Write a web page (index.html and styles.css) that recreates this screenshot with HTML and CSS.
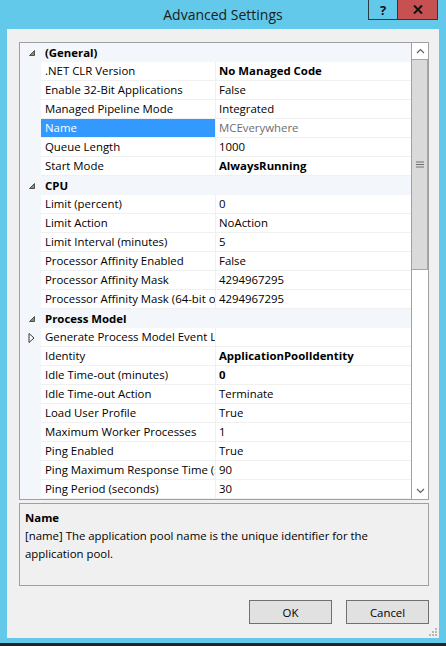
FILE: index.html
```html
<!DOCTYPE html>
<html>
<head>
<meta charset="utf-8">
<link rel="stylesheet" href="styles.css">
</head>
<body>
<div class="frame">
  <div class="titlebar">
    <div></div>
    <div class="title">Advanced Settings</div>
    <div class="caption-btns">
      <div class="cbtn help">?</div>
      <div class="cbtn close">
        <svg width="10" height="9" viewBox="0 0 10 9"><path d="M1 0.5 L9 8.5 M9 0.5 L1 8.5" stroke="#111" stroke-width="2" fill="none"/></svg>
      </div>
    </div>
  </div>
  <div class="client">
    <div class="grid">
      <div class="rows">
        <div class="row cat"><span class="gut"><svg class="exp" width="8" height="8" viewBox="0 0 8 8"><path d="M6.5 1.5 L6.5 6.5 L1.5 6.5 Z" fill="#8a8a8a" stroke="#505050" stroke-width="1"/></svg></span><span class="catname">(General)</span></div>
        <div class="row"><span class="gut"></span><span class="name">.NET CLR Version</span><span class="val b">No Managed Code</span></div>
        <div class="row"><span class="gut"></span><span class="name">Enable 32-Bit Applications</span><span class="val">False</span></div>
        <div class="row"><span class="gut"></span><span class="name">Managed Pipeline Mode</span><span class="val">Integrated</span></div>
        <div class="row sel"><span class="gut"></span><span class="name">Name</span><span class="val ro">MCEverywhere</span></div>
        <div class="row"><span class="gut"></span><span class="name">Queue Length</span><span class="val">1000</span></div>
        <div class="row"><span class="gut"></span><span class="name">Start Mode</span><span class="val b">AlwaysRunning</span></div>
        <div class="row cat"><span class="gut"><svg class="exp" width="8" height="8" viewBox="0 0 8 8"><path d="M6.5 1.5 L6.5 6.5 L1.5 6.5 Z" fill="#8a8a8a" stroke="#505050" stroke-width="1"/></svg></span><span class="catname">CPU</span></div>
        <div class="row"><span class="gut"></span><span class="name">Limit (percent)</span><span class="val">0</span></div>
        <div class="row"><span class="gut"></span><span class="name">Limit Action</span><span class="val">NoAction</span></div>
        <div class="row"><span class="gut"></span><span class="name">Limit Interval (minutes)</span><span class="val">5</span></div>
        <div class="row"><span class="gut"></span><span class="name">Processor Affinity Enabled</span><span class="val">False</span></div>
        <div class="row"><span class="gut"></span><span class="name">Processor Affinity Mask</span><span class="val">4294967295</span></div>
        <div class="row"><span class="gut"></span><span class="name">Processor Affinity Mask (64-bit option)</span><span class="val">4294967295</span></div>
        <div class="row cat"><span class="gut"><svg class="exp" width="8" height="8" viewBox="0 0 8 8"><path d="M6.5 1.5 L6.5 6.5 L1.5 6.5 Z" fill="#8a8a8a" stroke="#505050" stroke-width="1"/></svg></span><span class="catname">Process Model</span></div>
        <div class="row"><span class="gut"><svg class="tri" width="7" height="10" viewBox="0 0 7 10"><path d="M1 0.5 L6 5 L1 9.5 Z" fill="#fff" stroke="#333" stroke-width="1"/></svg></span><span class="name">Generate Process Model Event Log Entry</span><span class="val"></span></div>
        <div class="row"><span class="gut"></span><span class="name">Identity</span><span class="val b">ApplicationPoolIdentity</span></div>
        <div class="row"><span class="gut"></span><span class="name">Idle Time-out (minutes)</span><span class="val b">0</span></div>
        <div class="row"><span class="gut"></span><span class="name">Idle Time-out Action</span><span class="val">Terminate</span></div>
        <div class="row"><span class="gut"></span><span class="name">Load User Profile</span><span class="val">True</span></div>
        <div class="row"><span class="gut"></span><span class="name">Maximum Worker Processes</span><span class="val">1</span></div>
        <div class="row"><span class="gut"></span><span class="name">Ping Enabled</span><span class="val">True</span></div>
        <div class="row"><span class="gut"></span><span class="name">Ping Maximum Response Time (seconds)</span><span class="val">90</span></div>
        <div class="row"><span class="gut"></span><span class="name">Ping Period (seconds)</span><span class="val">30</span></div>
      </div>
      <div class="sb">
        <div class="sb-btn"><svg width="9" height="6" viewBox="0 0 9 6"><path d="M1 5 L4.5 1.5 L8 5" stroke="#606060" stroke-width="1.2" fill="none"/></svg></div>
        <div class="sb-thumb"><svg width="8" height="7" viewBox="0 0 8 7"><path d="M0 1 H8 M0 3.5 H8 M0 6 H8" stroke="#707070" stroke-width="1.2"/></svg></div>
        <div class="sb-track"></div>
        <div class="sb-btn"><svg width="9" height="6" viewBox="0 0 9 6"><path d="M1 1 L4.5 4.5 L8 1" stroke="#606060" stroke-width="1.2" fill="none"/></svg></div>
      </div>
    </div>
    <div class="desc">
      <div class="desc-title">Name</div>
      <div class="desc-text">[name] The application pool name is the unique identifier for the application pool.</div>
    </div>
    <div class="buttons">
      <div class="btn">OK</div>
      <div class="btn">Cancel</div>
    </div>
    <svg class="grip" width="8" height="8" viewBox="0 0 8 8"><g fill="#b8b8b8"><rect x="6" y="0" width="2" height="2"/><rect x="3" y="3" width="2" height="2"/><rect x="6" y="3" width="2" height="2"/><rect x="0" y="6" width="2" height="2"/><rect x="3" y="6" width="2" height="2"/><rect x="6" y="6" width="2" height="2"/></g></svg>
  </div>
</div>
</body>
</html>
```

FILE: styles.css
```css
html, body {
  margin: 0;
  padding: 0;
  background: #63c9ea;
}
body {
  font-family: "Open Sans", "Liberation Sans", Arial, sans-serif;
  font-size: 11.4px;
  color: #000;
}
.frame {
  width: 446px;
  height: 643px;
  background: #63c9ea;
  border-bottom: 3px solid #1d2428;
  display: flex;
  flex-direction: column;
}
.titlebar {
  height: 29px;
  display: grid;
  grid-template-columns: 1fr auto 1fr;
  flex-shrink: 0;
}
.title {
  font-size: 14px;
  line-height: 30px;
  color: #1b1b1b;
}
.caption-btns {
  justify-self: end;
  align-self: start;
  display: flex;
  margin-right: 8px;
}
.cbtn {
  height: 20px;
  box-sizing: border-box;
  display: flex;
  align-items: center;
  justify-content: center;
  font-weight: bold;
  font-size: 13px;
  border: 1px solid #2a3a40;
  border-top: none;
}
.help {
  width: 29px;
  background: #63c9ea;
  border-right: none;
  color: #111;
}
.close {
  width: 41px;
  background: #c75050;
}
.client {
  position: relative;
  margin: 0 7px;
  height: 609px;
  background: #f0f0f0;
  box-sizing: border-box;
  padding: 13px 10px 0 12px;
  display: flex;
  flex-direction: column;
}
.grid {
  height: 458px;
  box-sizing: border-box;
  border: 1px solid #a0a0a0;
  background: #fff;
  display: flex;
}
.rows {
  flex: 1;
  display: flex;
  flex-direction: column;
  min-width: 0;
}
.row {
  height: 19px;
  display: flex;
  flex-shrink: 0;
}
.gut {
  width: 21px;
  flex-shrink: 0;
  background: #f3f6fb;
  position: relative;
}
.exp {
  position: absolute;
  left: 8px;
  top: 6px;
}
.tri {
  position: absolute;
  left: 8px;
  top: 5px;
}
.name {
  width: 170px;
  flex-shrink: 0;
  padding-left: 4px;
  border-right: 1px solid #f0f0f0;
  border-bottom: 1px solid #f0f0f0;
  line-height: 18px;
  white-space: nowrap;
  overflow: hidden;
}
.val {
  flex: 1;
  min-width: 0;
  padding-left: 3px;
  border-bottom: 1px solid #f0f0f0;
  line-height: 18px;
  white-space: nowrap;
  overflow: hidden;
}
.b { font-weight: bold; }
.ro { color: #6d6d6d; }
.sel .name {
  background: #3399ff;
  color: #fff;
}
.cat {
  background: #f3f6fb;
}
.catname {
  padding-left: 4px;
  font-weight: bold;
  line-height: 19px;
}
.sb {
  width: 17px;
  flex-shrink: 0;
  box-sizing: border-box;
  border-left: 1px solid #a0a0a0;
  display: flex;
  flex-direction: column;
  background: #fff;
}
.sb-btn {
  height: 16px;
  flex-shrink: 0;
  display: flex;
  align-items: center;
  justify-content: center;
  background: #fff;
}
.sb-thumb {
  height: 211px;
  box-sizing: border-box;
  background: #dadada;
  border: 1px solid #a6a6a6;
  border-left: none;
  display: flex;
  align-items: center;
  justify-content: center;
  padding-left: 1px;
}
.sb-track {
  flex: 1;
  background: #fff;
}
.desc {
  margin-top: 3px;
  height: 83px;
  box-sizing: border-box;
  border: 1px solid #a0a0a0;
  padding: 5px 5px 0 5px;
  line-height: 18px;
}
.desc-title {
  font-weight: bold;
}
.desc-text {
  width: 385px;
}
.buttons {
  margin-top: 14px;
  display: flex;
  justify-content: flex-end;
  gap: 14px;
}
.btn {
  width: 83px;
  height: 24px;
  box-sizing: border-box;
  border: 1px solid #707070;
  background: #e1e1e1;
  display: flex;
  align-items: center;
  justify-content: center;
}
.grip {
  position: absolute;
  right: 2px;
  bottom: 2px;
}
```
